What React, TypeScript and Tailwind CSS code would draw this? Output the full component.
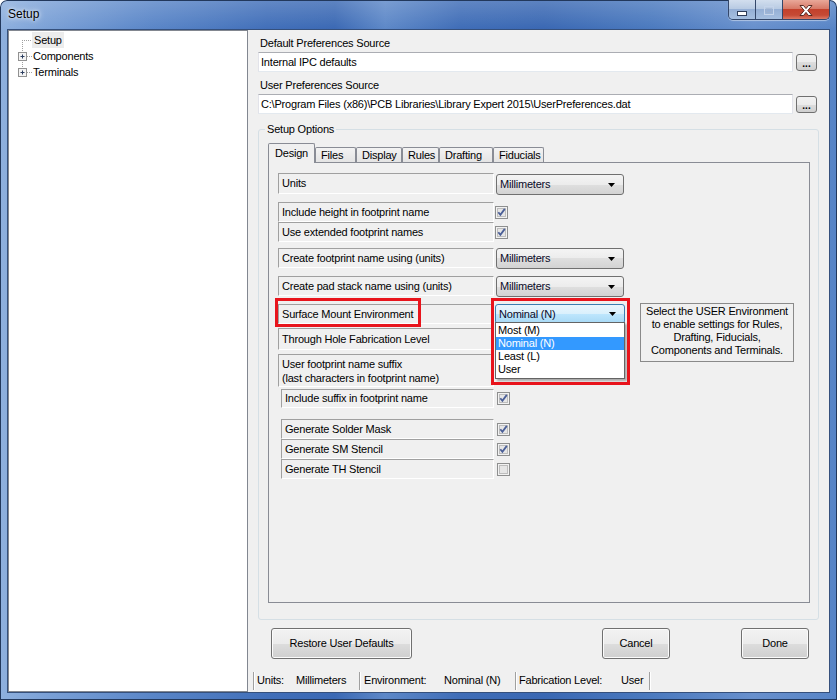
import React from "react";

const FONT = "font-['Liberation_Sans',Arial,sans-serif]";

function Check({ checked }: { checked: boolean }) {
  return (
    <svg width="13" height="13" viewBox="0 0 13 13" className="shrink-0 block">
      <rect x="0.5" y="0.5" width="12" height="12" fill="#f2f2f2" stroke="#8e8f8f" />
      <rect x="2.5" y="2.5" width="8" height="8" fill="#e6e6e6" stroke="#bdbdbd" />
      {checked && (
        <path d="M3.3 6.3 L5.4 8.9 L9.8 2.9" fill="none" stroke="#4b5f97" strokeWidth="1.8" />
      )}
    </svg>
  );
}

function Arrow() {
  return (
    <svg width="7" height="4" viewBox="0 0 7 4" className="block">
      <path d="M0 0h7L3.5 4z" fill="#000" />
    </svg>
  );
}

function Combo({ text, focused }: { text: string; focused?: boolean }) {
  return (
    <div
      className={
        focused
          ? "w-[130px] h-[20px] rounded-[3px] border border-[#3c7fb1] bg-[linear-gradient(#eaf6fd_0%,#d9f0fc_50%,#bee6fd_50%,#a7d9f5_100%)] flex items-center justify-between pl-[3px] pr-[8px]"
          : "w-[128px] h-[21px] rounded-[3px] border border-[#707070] bg-[linear-gradient(#f4f4f4_0%,#ececec_50%,#dfdfdf_50%,#d3d3d3_100%)] flex items-center justify-between pl-[3px] pr-[8px]"
      }
    >
      <span className="text-[#0a0a28]">{text}</span>
      <Arrow />
    </div>
  );
}

function LabelBox({
  children,
  className,
}: {
  children: React.ReactNode;
  className: string;
}) {
  return (
    <div
      className={`border border-t-[#a0a0a0] border-l-[#a0a0a0] border-b-white border-r-white flex items-center pl-[3px] whitespace-nowrap ${className}`}
    >
      {children}
    </div>
  );
}

function WinButton({ children, className }: { children: React.ReactNode; className: string }) {
  return (
    <div
      className={`h-[31px] rounded-[3px] border border-[#707070] bg-[linear-gradient(#f2f2f2_0%,#ebebeb_50%,#dddddd_50%,#cfcfcf_100%)] shadow-[inset_0_0_0_1px_#fbfbfb] flex items-center justify-center ${className}`}
    >
      {children}
    </div>
  );
}

function DotsButton() {
  return (
    <div className="ml-[3px] w-[21px] h-[17px] rounded-[3px] border border-[#707070] bg-[linear-gradient(#f2f2f2_0%,#ebebeb_50%,#dddddd_50%,#cfcfcf_100%)] flex items-end justify-center pb-[1px]">
      <span className="text-[10px] leading-[10px] font-bold tracking-[0px]">...</span>
    </div>
  );
}

function PathRow({ text }: { text: string }) {
  return (
    <div className="mt-[2px] h-[20px] flex items-center">
      <div className="w-[535px] h-[20px] bg-white border border-[#abadb3] border-l-[#e2e3ea] border-r-[#e2e3ea] border-b-[#e3e9ef] flex items-center pl-[2px] whitespace-nowrap">
        {text}
      </div>
      <DotsButton />
    </div>
  );
}

function TitleBar() {
  return (
    <div className="h-[29px] flex items-start justify-between">
      <div className="h-[29px] flex items-center pl-[8px] text-[12px] tracking-[0px] [text-shadow:0_0_6px_#ffffff,0_0_3px_#dfeaf8]">
        Setup
      </div>
      <div className="mr-[7px] flex h-[20px] rounded-b-[5px] border border-t-0 border-[#34476a] overflow-hidden shadow-[0_1px_1px_rgba(255,255,255,0.45)]">
        <div className="w-[27px] h-full border-r border-[#34476a] bg-[linear-gradient(#d2deee_0%,#b9cbe3_45%,#95afd5_50%,#a6bfe0_100%)] flex items-start justify-center pt-[11px]">
          <svg width="10" height="5" viewBox="0 0 10 5" className="block">
            <rect x="0.5" y="0.5" width="9" height="4" fill="#ffffff" stroke="#2e3c58" />
          </svg>
        </div>
        <div className="w-[27px] h-full border-r border-[#34476a] bg-[linear-gradient(#d2deee_0%,#b9cbe3_45%,#95afd5_50%,#a6bfe0_100%)] flex items-start justify-center pt-[6px]">
          <svg width="10" height="9" viewBox="0 0 10 9" className="block">
            <rect x="0.5" y="0.5" width="9" height="8" fill="none" stroke="#c6d4ea" />
            <rect x="2.5" y="3" width="5" height="3.5" fill="none" stroke="#9fb2d0" />
          </svg>
        </div>
        <div className="w-[46px] h-full bg-[linear-gradient(#e9a899_0%,#d77a68_45%,#c3412c_50%,#c54a35_80%,#dc7a66_100%)] flex items-start justify-center pt-[5px]">
          <svg width="14" height="11" viewBox="0 0 14 11" className="block">
            <path
              d="M1 0.5h3.5L7 3.6 9.5 0.5H13L8.8 5.5 13 10.5H9.5L7 7.4 4.5 10.5H1L5.2 5.5z"
              fill="#ffffff"
              stroke="#4a1c14"
              strokeWidth="0.9"
              strokeLinejoin="round"
            />
          </svg>
        </div>
      </div>
    </div>
  );
}

function Tree() {
  return (
    <div className="relative w-[240px] h-full border border-[#828790] bg-white">
      <svg className="absolute left-0 top-0" width="40" height="60" viewBox="0 0 40 60">
        <g stroke="#a0a0a0" strokeWidth="1" strokeDasharray="1 1" fill="none">
          <path d="M13.5 9 V37" />
          <path d="M13 9.5 H23" />
          <path d="M18 25.5 H23" />
          <path d="M18 41.5 H23" />
        </g>
        <g>
          <rect x="9.5" y="21.5" width="8" height="8" fill="#f4f4f4" stroke="#919191" />
          <path d="M11.5 25.5 H15.5 M13.5 23.5 V27.5" stroke="#2c3e60" strokeWidth="1" />
          <rect x="9.5" y="37.5" width="8" height="8" fill="#f4f4f4" stroke="#919191" />
          <path d="M11.5 41.5 H15.5 M13.5 39.5 V43.5" stroke="#2c3e60" strokeWidth="1" />
        </g>
      </svg>
      <div className="pt-[1px]">
        <div className="h-[16px] flex items-center ml-[23px]">
          <span className="h-[16px] flex items-center px-[2px] bg-[#ececec]">Setup</span>
        </div>
        <div className="h-[16px] flex items-center ml-[23px]">
          <span className="px-[1px]">Components</span>
        </div>
        <div className="h-[16px] flex items-center ml-[23px]">
          <span className="px-[1px]">Terminals</span>
        </div>
      </div>
    </div>
  );
}

function Sep() {
  return <div className="w-[2px] h-[18px] border-l border-r border-l-[#a0a0a0] border-r-white shrink-0" />;
}

function StatusBar() {
  return (
    <div className="mt-auto h-[23px] flex items-center pl-[5px] whitespace-nowrap">
      <Sep />
      <span className="pl-[2px] w-[41px]">Units:</span>
      <span className="w-[63px]">Millimeters</span>
      <Sep />
      <span className="pl-[3px] w-[83px]">Environment:</span>
      <span className="w-[71px]">Nominal (N)</span>
      <Sep />
      <span className="pl-[2px] w-[104px]">Fabrication Level:</span>
      <span className="w-[28px]">User</span>
      <Sep />
    </div>
  );
}

const tabs = [
  { name: "Files", w: "w-[41px]" },
  { name: "Display", w: "w-[46px]" },
  { name: "Rules", w: "w-[37px]" },
  { name: "Drafting", w: "w-[54px]" },
  { name: "Fiducials", w: "w-[51px]" },
];

function TabPage() {
  return (
    <div className="relative -mt-[1px] ml-[9px] w-[542px] h-[441px] border border-[#898c95] bg-[#f0f0f0] pl-[9px] pt-[10px]">
      {/* Units */}
      <div className="flex items-start">
        <LabelBox className="w-[216px] h-[21px]">Units</LabelBox>
        <div className="ml-[2px] mt-[1px]">
          <Combo text="Millimeters" />
        </div>
      </div>
      {/* Include height */}
      <div className="mt-[7px] flex items-center">
        <LabelBox className="w-[216px] h-[20px]">Include height in footprint name</LabelBox>
        <div className="ml-[1px]">
          <Check checked />
        </div>
      </div>
      <div className="flex items-center">
        <LabelBox className="w-[216px] h-[20px]">Use extended footprint names</LabelBox>
        <div className="ml-[1px]">
          <Check checked />
        </div>
      </div>
      {/* Create footprint */}
      <div className="mt-[6px] flex items-start">
        <LabelBox className="w-[216px] h-[20px]">Create footprint name using (units)</LabelBox>
        <div className="ml-[2px]">
          <Combo text="Millimeters" />
        </div>
      </div>
      <div className="mt-[7px] flex items-start">
        <LabelBox className="w-[216px] h-[20px]">Create pad stack name using (units)</LabelBox>
        <div className="ml-[2px]">
          <Combo text="Millimeters" />
        </div>
      </div>
      {/* Surface */}
      <div className="mt-[7px] flex items-start">
        <LabelBox className="w-[216px] h-[20px]">Surface Mount Environment</LabelBox>
        <div className="ml-[1px]">
          <Combo text="Nominal (N)" focused />
        </div>
      </div>
      <div className="mt-[4px] flex items-start">
        <LabelBox className="w-[216px] h-[22px]">Through Hole Fabrication Level</LabelBox>
      </div>
      <div className="mt-[4px] flex items-start">
        <LabelBox className="w-[216px] h-[33px] leading-[14px]">
          <div>
            <div>User footprint name suffix</div>
            <div>(last characters in footprint name)</div>
          </div>
        </LabelBox>
      </div>
      <div className="mt-[2px] ml-[3px] flex items-center">
        <LabelBox className="w-[213px] h-[19px]">Include suffix in footprint name</LabelBox>
        <div className="ml-[3px]">
          <Check checked />
        </div>
      </div>
      <div className="mt-[11px] ml-[3px] flex items-center">
        <LabelBox className="w-[213px] h-[20px]">Generate Solder Mask</LabelBox>
        <div className="ml-[3px]">
          <Check checked />
        </div>
      </div>
      <div className="ml-[3px] flex items-center">
        <LabelBox className="w-[213px] h-[20px]">Generate SM Stencil</LabelBox>
        <div className="ml-[3px]">
          <Check checked />
        </div>
      </div>
      <div className="ml-[3px] flex items-center">
        <LabelBox className="w-[213px] h-[20px]">Generate TH Stencil</LabelBox>
        <div className="ml-[3px]">
          <Check checked={false} />
        </div>
      </div>

      {/* Info box */}
      <div className="absolute left-[371px] top-[140px] w-[154px] h-[59px] border border-[#8a8a8a] pt-[1px] text-center leading-[13px]">
        <div>Select the USER Environment</div>
        <div>to enable settings for Rules,</div>
        <div>Drafting, Fiducials,</div>
        <div>Components and Terminals.</div>
      </div>

      {/* Dropdown list */}
      <div className="absolute left-[226px] top-[159px] w-[130px] h-[57px] bg-white border border-[#646464] shadow-[2px_2px_2px_rgba(0,0,0,0.3)] pt-[1px]">
        <div className="h-[13px] leading-[13px] pl-[2px]">Most (M)</div>
        <div className="h-[13px] leading-[13px] pl-[2px] bg-[#3399ff] text-white">Nominal (N)</div>
        <div className="h-[13px] leading-[13px] pl-[2px]">Least (L)</div>
        <div className="h-[13px] leading-[13px] pl-[2px]">User</div>
      </div>

      {/* Red annotation boxes */}
      <div className="absolute left-[6px] top-[135px] w-[146px] h-[29px] border-[3px] border-[#e8141c]" />
      <div className="absolute left-[222px] top-[135px] w-[139px] h-[87px] border-[3px] border-[#e8141c]" />
    </div>
  );
}

function RightPanel() {
  return (
    <div className="w-[581px] h-full bg-[#f0f0f0] flex flex-col">
      <div className="pl-[10px]">
        <div className="mt-[6px] h-[14px] leading-[14px] pl-[2px]">Default Preferences Source</div>
        <PathRow text="Internal IPC defaults" />
        <div className="mt-[6px] h-[14px] leading-[14px] pl-[2px]">User Preferences Source</div>
        <PathRow text={"C:\\Program Files (x86)\\PCB Libraries\\Library Expert 2015\\UserPreferences.dat"} />
        <fieldset className="mt-[8px] w-[561px] h-[498px] border border-[#d5dfe5] rounded-[3px] min-w-0">
          <legend className="ml-[6px] px-[2px] h-[14px] leading-[14px]">Setup Options</legend>
          <div className="mt-[7px] ml-[9px] h-[20px] flex items-end">
            <div className="relative z-10 w-[47px] h-[20px] border border-b-0 border-[#898c95] bg-[#f0f0f0] flex items-start justify-center pt-[3px] rounded-t-[2px]">
              Design
            </div>
            {tabs.map((t) => (
              <div
                key={t.name}
                className={`${t.w} h-[16px] border border-b-0 border-[#898c95] bg-[linear-gradient(#f3f3f3,#e3e3e3)] flex items-start pl-[5px] pt-[1px] rounded-t-[2px]`}
              >
                {t.name}
              </div>
            ))}
          </div>
          <TabPage />
        </fieldset>
        <div className="mt-[8px] flex">
          <WinButton className="ml-[13px] w-[141px]">Restore User Defaults</WinButton>
          <WinButton className="ml-[190px] w-[68px]">Cancel</WinButton>
          <WinButton className="ml-[71px] w-[68px]">Done</WinButton>
        </div>
      </div>
      <StatusBar />
    </div>
  );
}

export default function App() {
  return (
    <div className={`w-[837px] h-[700px] overflow-hidden bg-white ${FONT} text-[11px] tracking-[-0.2px] leading-[13px] text-black`}>
      <div className="relative w-[837px] h-[700px] rounded-t-[7px] shadow-[inset_0_0_0_1px_#22385c] bg-[linear-gradient(180deg,rgba(255,255,255,0.18)_0px,rgba(255,255,255,0)_29px),linear-gradient(90deg,#8eb0de_0%,#7aa0d6_6%,#5a86c8_18%,#416fb9_32%,#3b69b4_40%,#5d88c8_46%,#3f6db7_55%,#3a68b3_65%,#4b7abf_78%,#6890cd_90%,#5784c6_100%)]">
        <TitleBar />
        <div className="ml-[7px] w-[823px] h-[664px] border border-[#35507c] flex">
          <Tree />
          <RightPanel />
        </div>
      </div>
    </div>
  );
}
